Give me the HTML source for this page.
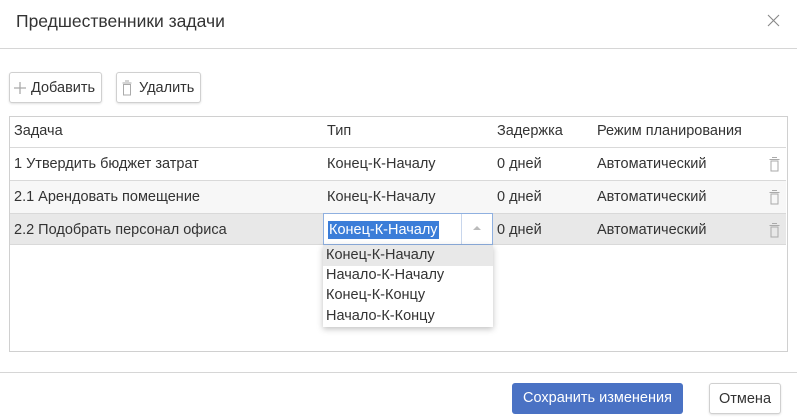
<!DOCTYPE html>
<html><head><meta charset="utf-8"><style>
*{box-sizing:border-box;margin:0;padding:0}
body{width:797px;height:418px;background:#fff;font-family:"Liberation Sans","DejaVu Sans",sans-serif;font-size:14.5px;color:#333;position:relative;overflow:hidden}
.a{position:absolute;white-space:nowrap}
.btn{position:absolute;border:1px solid #d0d0d0;border-radius:3px;background:#fff;box-shadow:0 1px 2px rgba(0,0,0,.12);height:31px;line-height:30px}
.row{position:absolute;left:10px;width:776px;border-top:1px solid #d9d9d9}
.cell{position:absolute;top:0;white-space:nowrap}
.trash{position:absolute;left:759px;width:11px;height:16px}
</style></head><body>
<div class="a" style="left:16px;top:11px;font-size:17.5px;color:#333">Предшественники задачи</div>
<svg class="a" style="left:767px;top:14px" width="13" height="13"><path d="M1 1L12 12M12 1L1 12" stroke="#888" stroke-width="1.1"/></svg>
<div class="a" style="left:0;top:48px;width:797px;height:1px;background:#d6d6d6"></div>

<div class="btn" style="left:9px;top:72px;width:93px">
<svg class="a" style="left:4px;top:9px" width="12" height="12"><path d="M6 0V12M0 6H12" stroke="#aaa" stroke-width="1.3"/></svg>
<span class="a" style="left:21px;top:0">Добавить</span></div>
<div class="btn" style="left:116px;top:72px;width:85px">
<svg class="a" style="left:5px;top:7px" width="10" height="16"><path d="M3 1H7M0.5 3H9.5M1.5 4.5V15H8.5V4.5Z" stroke="#aaa" fill="none" stroke-width="1"/></svg>
<span class="a" style="left:22px;top:0">Удалить</span></div>

<div class="a" style="left:9px;top:116px;width:779px;height:236px;border:1px solid #d0d0d0"></div>
<div class="a" style="left:14px;top:123px">Задача</div>
<div class="a" style="left:327px;top:123px">Тип</div>
<div class="a" style="left:497px;top:123px">Задержка</div>
<div class="a" style="left:597px;top:123px">Режим планирования</div>

<div class="row" style="top:147px;height:33px;background:#fff">
<span class="cell" style="left:4px;top:8px">1 Утвердить бюджет затрат</span>
<span class="cell" style="left:317px;top:8px">Конец-К-Началу</span>
<span class="cell" style="left:487px;top:8px">0 дней</span>
<span class="cell" style="left:587px;top:8px">Автоматический</span>
<svg class="trash" style="top:8px" viewBox="0 0 11 16"><path d="M3 1.5H8M0.5 3.5H10.5M2 5V15H9V5Z" stroke="#aaa" fill="none"/></svg></div>
<div class="row" style="top:180px;height:33px;background:#f7f7f7">
<span class="cell" style="left:4px;top:8px">2.1 Арендовать помещение</span>
<span class="cell" style="left:317px;top:8px">Конец-К-Началу</span>
<span class="cell" style="left:487px;top:8px">0 дней</span>
<span class="cell" style="left:587px;top:8px">Автоматический</span>
<svg class="trash" style="top:8px" viewBox="0 0 11 16"><path d="M3 1.5H8M0.5 3.5H10.5M2 5V15H9V5Z" stroke="#aaa" fill="none"/></svg></div>
<div class="row" style="top:213px;height:32px;background:#e8e8e8;border-bottom:1px solid #d9d9d9">
<span class="cell" style="left:4px;top:8px">2.2 Подобрать персонал офиса</span>
<span class="cell" style="left:487px;top:8px">0 дней</span>
<span class="cell" style="left:587px;top:8px">Автоматический</span>
<svg class="trash" style="top:8px" viewBox="0 0 11 16"><path d="M3 1.5H8M0.5 3.5H10.5M2 5V15H9V5Z" stroke="#aaa" fill="none"/></svg></div>

<div class="a" style="left:323px;top:213px;width:170px;height:32px;border:1px solid #8fb0e0;background:#fff">
<span class="a" style="left:4px;top:7px;background:#3b7dd8;color:#fff;padding:0 1px;line-height:18px">Конец-К-Началу</span>
<div class="a" style="left:137px;top:0;width:1px;height:30px;background:#c8d6ec"></div>
<svg class="a" style="left:149px;top:12px" width="8" height="5"><path d="M0 4L4 0L8 4Z" fill="#bbb"/></svg>
</div>
<div class="a" style="left:323px;top:245px;width:170px;height:82px;background:#fff;box-shadow:0 2px 6px rgba(0,0,0,.25)">
<div class="a" style="left:0;top:0;width:170px;height:21px;background:#e8e8e8"></div>
<span class="a" style="left:3px;top:2px">Конец-К-Началу</span>
<span class="a" style="left:3px;top:22px">Начало-К-Началу</span>
<span class="a" style="left:3px;top:42px">Конец-К-Концу</span>
<span class="a" style="left:3px;top:63px">Начало-К-Концу</span>
</div>

<div class="a" style="left:0;top:372px;width:797px;height:1px;background:#d6d6d6"></div>
<div class="a" style="left:512px;top:383px;width:171px;height:31px;background:#4a72c4;border-radius:3px;color:#fff;text-align:center;line-height:31px">Сохранить изменения</div>
<div class="btn" style="left:709px;top:383px;width:72px;text-align:center;line-height:30px">Отмена</div>
</body></html>
